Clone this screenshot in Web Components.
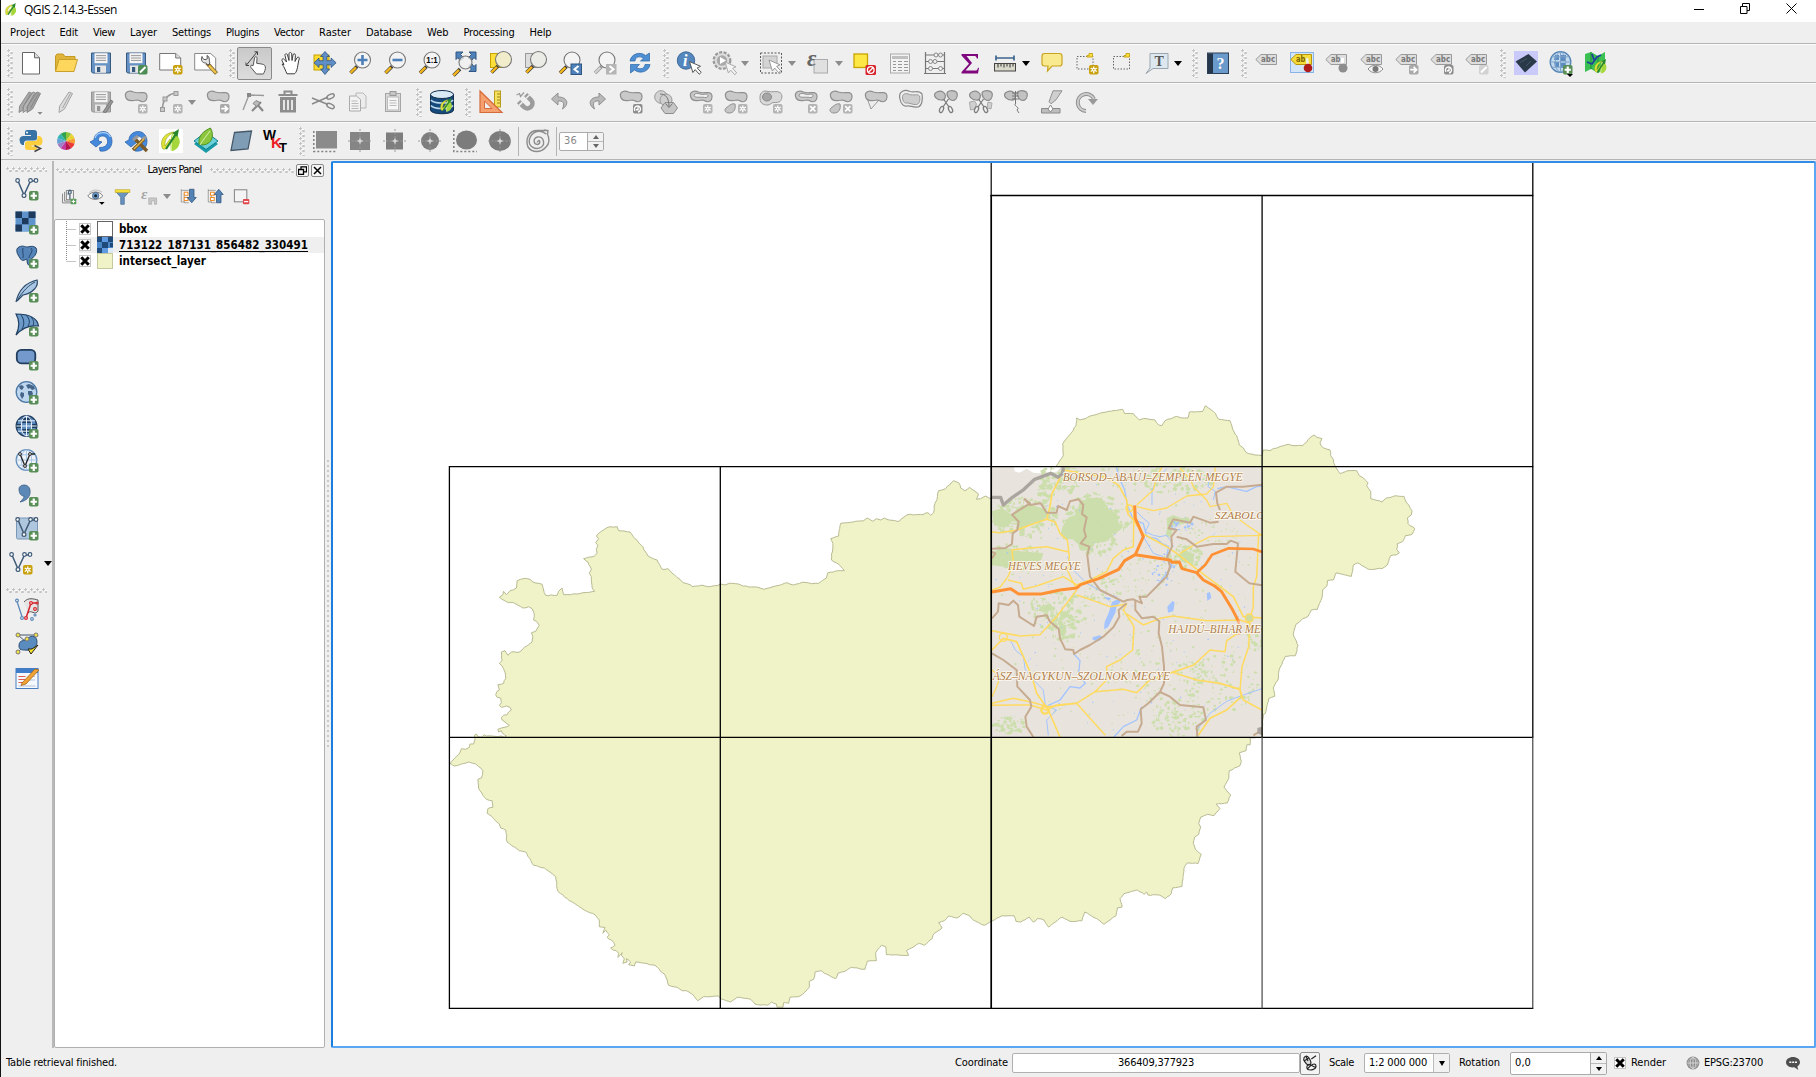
<!DOCTYPE html>
<html lang="en">
<head>
<meta charset="utf-8">
<title>QGIS 2.14.3-Essen</title>
<style>
html,body{margin:0;height:100%;overflow:hidden;background:#efefef;color:#000}
body{font:11px "DejaVu Sans Condensed","DejaVu Sans",sans-serif;font-stretch:condensed}
</style>
</head>
<body>
<qgis-window></qgis-window>
<script>
/* ---------- icon library, every icon is drawn on a 24 x 24 grid ---------- */
const badge=(c,inner)=>`<rect x="14" y="14" width="9.5" height="9.5" rx="1.8" fill="${c}"/>${inner}`;
const plus=badge('#5a8e58','<path d="M18.75 15.6v6.3M15.6 18.75h6.3" stroke="#fff" stroke-width="2.2"/>');
const ast='<path d="M18.75 15.4v6.8M15.7 17l6.1 3.5M15.7 20.5l6.1-3.5" stroke="#fff" stroke-width="1.3"/><circle cx="18.75" cy="18.75" r="1.7" fill="#fff"/>';
const gold=badge('#c8a10c',ast+'<circle cx="18.75" cy="18.75" r=".8" fill="#c8a10c"/>');
const gstar=badge('#b4b4b4',ast+'<circle cx="18.75" cy="18.75" r=".8" fill="#b4b4b4"/>');
const gx=badge('#b4b4b4','<path d="M16.2 16.2l5.2 5.2M21.4 16.2l-5.2 5.2" stroke="#fff" stroke-width="1.7"/>');
const garrow=badge('#a9a9a9','<path d="M15.2 18.7h6M18.6 15.8l3 2.9-3 2.9" fill="none" stroke="#fff" stroke-width="1.7"/>');
const grot=badge('#8c8c8c','<path d="M16 20.8a3 3 0 1 1 3 1.2M19 17.3v2.4h-2" fill="none" stroke="#fff" stroke-width="1.4"/>');
const cursor=(x,y,f='#fff',s='#555')=>`<path transform="translate(${x} ${y})" d="M0 0l3.4 11 2.3-2.9 4 4.6 2-1.8-4-4.5 3.3-1.6z" fill="${f}" stroke="${s}" stroke-width="1"/>`;
const mag=(x,y,inner='',h='#f3b51c',fill='#f4f4f4')=>`<path d="M${x-5.5} ${y+6.5}L${x-12} ${y+13}" stroke="#333" stroke-width="3.6"/><path d="M${x-6.5} ${y+7.3}L${x-12} ${y+12.8}" stroke="${h}" stroke-width="2.4"/><circle cx="${x}" cy="${y}" r="8" fill="${fill}" stroke="#777" stroke-width="1.1"/>${inner}`;
const floppy=(a,b)=>`<path d="M2.5 2h19v20H3.6L2.5 20.8z" fill="${a}" stroke="${b}"/><rect x="5.5" y="2.2" width="13" height="10" fill="#f4f4f4"/><path d="M7 4.6h10M7 7h10M7 9.4h10" stroke="#999"/><rect x="6" y="14.5" width="11" height="7.3" fill="#e6e6e6"/><rect x="8" y="16" width="3.2" height="5" fill="${b}"/>`;
const blob=(f='#c9c9c9',s='#8f8f8f')=>`<path d="M1.400 5.600C1 1 6 .500 9.500 2c4 1.600 7 .2 10.500.6C23.500 3.300 23.500 7 22.400 9.500c-1.400 3-5 2.600-7 1-2-1.300-4 .2-7 .1C4.500 10.800 1.700 9 1.400 5.600z" fill="${f}" stroke="${s}" stroke-width="1.200"/>`;
const blobHole='<path d="M5 5.200c.5-2 3.500-2.200 6-1.200 3 1.200 6-.500 7.500.3 1.500 1.200 0 4-3 3.200-3-.9-10.500 1-10.500-2.300z" fill="#efefef" stroke="#8f8f8f"/>';
const tag=(f='#dedede',s='#9a9a9a',t='#777',w='abc')=>`<path d="M.8 8.500L6 3.500h15.500v10H6z" fill="${f}" stroke="${s}"/><text x="6" y="11.400" font-size="8" font-weight="bold" font-family="DejaVu Sans" fill="${t}" textLength="${w.length*4.7}" lengthAdjust="spacingAndGlyphs">${w}</text>`;
const vnodes=(c='#3d5a78',y=0)=>`<path d="M3 ${4+y}L9 ${18+y}L15.500 ${4+y}H21" fill="none" stroke="${c}" stroke-width="1.500"/><g fill="#fff" stroke="${c}" stroke-width="1.200"><circle cx="2.600" cy="${3.500+y}" r="1.800"/><circle cx="9" cy="${18.500+y}" r="1.900"/><circle cx="15.500" cy="${3.500+y}" r="1.800"/><circle cx="21" cy="${3.500+y}" r="1.800"/></g>`;
const scissors=()=>`<g fill="none" stroke="#7c7c7c" stroke-width="1.300"><path d="M9.500 9l5.500 8M14.500 9l-5.500 8"/><ellipse cx="7.500" cy="19.500" rx="1.800" ry="3.200" transform="rotate(25 7.500 19.500)"/><ellipse cx="16.500" cy="19.500" rx="1.800" ry="3.200" transform="rotate(-25 16.500 19.500)"/></g>`;
const halves='<path d="M.7 6C-.3 2 6 0 9 2c3 1.500 3 5.500 1 7.500-2 1.500-4 0-6-.2C2 8.500 1.200 7.500.7 6zM13.500 2c3-2.500 9.800-1.500 9.800 2.500 0 3.500-2 6-5 6-3-.3-6.500-5.500-4.800-8.500z" fill="#c2c2c2" stroke="#8a8a8a" stroke-width="1.200"/>';
const pencil=(x,y,f,s)=>`<path transform="translate(${x} ${y})" d="M12 1l3.500 1.500-8 15.500-5.500 3.500.6-6.300z" fill="${f}" stroke="${s}"/><path transform="translate(${x} ${y})" d="M13.500 2.500L5.500 17" stroke="${s}" fill="none"/>`;
const qleaf='<path d="M14 3c6 3 8 9 6 13-1.500 4-5 6-8 6-1-7-1-13 2-19z" fill="#a5d63c"/><path d="M14.500 5c-2 5-2.500 11-2.300 17" stroke="#e7f7b4" fill="none"/><path d="M15 3C6 4 1 10 3 18c.5 3 3 3 5 0l4-6-1-2-5 7c-.500-4 1-9 6-12z" fill="#e2e43a" stroke="#8aa018" stroke-width=".6"/><path d="M7 20L17 5" stroke="#28862e" stroke-width="2.200"/><path d="M20 0l-1.500 8-5-4z" fill="#28862e"/>';
const globe=(f='#bfd7ee',s='#4d79a8')=>`<circle cx="11.500" cy="11" r="10.300" fill="${f}" stroke="${s}" stroke-width="1.300"/>`;
const meridians=(s)=>`<path d="M1.500 11h20M3 5.800h17M3 16.200h17M11.500 1v20" stroke="${s}" fill="none"/><ellipse cx="11.500" cy="11" rx="5.200" ry="10" fill="none" stroke="${s}"/>`;
const target='<path d="M12 0v24M0 12h24" stroke="#9c9c9c" stroke-dasharray="2 1.500"/><path d="M12 9.500v5M9.500 12h5" stroke="#dcdcdc" stroke-width="1.500"/>';
const undo='<path d="M9 3L2.500 9 9 15v-4c5-.500 7 2 4.500 8C20.500 14.500 19 7 9 7z" fill="#b9b9b9" stroke="#8e8e8e"/>';
const wrench='<path d="M22.500 22.500L13 12" stroke="#7b6430" stroke-width="4"/><path d="M22 22L15 14.500" stroke="#f0c34a" stroke-width="2.500"/><path d="M8 5.500c-1.500 3 0 6.500 3.500 6.500 1 0 2 1.500 2.500 2l2-2c-1.500-2 .500-6-3-7.500l.3 3.300-2.300 1-2.500-1.500z" fill="#e4e4e4" stroke="#555"/>';
const hand='<path d="M6 13.500L4.200 10c-1-2 1-3 2.200-1.500L8.500 11 7 4.500c-.300-2 2-2.400 2.500-.5L11 9.500V3c0-2 2.600-2 2.700 0L14 9.500l1-5.600c.4-1.700 2.500-1.400 2.400.4L17 10.500l2-3.700c.9-1.500 2.800-.5 2.200 1.200C19.500 13 20 20 16.500 22.800H9C7.500 20 6.500 16 4 13z" fill="#fff" stroke="#3c3c3c"/>';

const ICONS={
new:'<path d="M3.500 1.500h12l5 5.300V23h-17z" fill="#fff" stroke="#666"/><path d="M15.500 1.500v5.300h5" fill="#ddd" stroke="#666"/>',
open:'<path d="M1.500 20V5l1.500-2h6l2 2.500h10V9" fill="#e0b437" stroke="#c39a26"/><path d="M5 8.500h18.500L20 20.500H1.500z" fill="#fcd75c" stroke="#c9a02c"/>',
save:floppy('#6591c4','#35597f'),
saveas:floppy('#6591c4','#35597f')+badge('#4c8c55','<path d="M16 21.500l5.500-5.500" stroke="#fff" stroke-width="2"/>'),
print:'<path d="M.7 2.500h16l5 4.500v12H.7z" fill="#fff" stroke="#777"/><path d="M16.700 2.500V7h5" fill="#ddd" stroke="#777"/>'+gold,
composer:'<path d="M.7 2.500h16l5 4.500v12H.7z" fill="#fff" stroke="#888"/>'+wrench,
touch:'<path d="M10.500 13l1-6c.5-2 2.600-1.500 2.500.3l-.3 5 5 .7c3 .5 4 2 3.700 4.500-.4 3-2 5-2 5.500h-7L8 16.500c-1.300-2 .6-3 2-1.700z" fill="#fff" stroke="#555"/><path d="M3.500 14L14 1M3 11.500v3h3M14.500 4V.8h-3" fill="none" stroke="#444"/>',
pan:hand,
panto:'<rect x="1" y="4" width="15" height="15" fill="#fddc2e" stroke="#c5a200"/><path d="M12 .500l4.500 5h-2.600v4.200h4.200V7l5 4.800-5 4.700v-2.700h-4.200V18h2.600L12 23.500 7.500 18h2.600v-4.200H6v2.700L1 11.800 6 7v2.700h4.100V5.500H7.500z" fill="#5e8fc8" stroke="#2e527b" stroke-width=".8"/>',
zoomin:mag(14.500,9,'<path d="M14.500 4v10M9.500 9h10" stroke="#4d7fb9" stroke-width="2.600"/>'),
zoomout:mag(14.500,9,'<path d="M9.500 9h10" stroke="#4d7fb9" stroke-width="2.600"/>'),
zoom11:mag(14,9,'<text x="8.300" y="12.400" font-size="9.500" font-weight="bold" font-family="Liberation Sans" textLength="11.500" lengthAdjust="spacingAndGlyphs">1:1</text>'),
zoomfull:'<path d="M3 1h7L7.500 3.500 11 7 7 9.500 5 6.500 3 8.500zM23 1h-7l2.500 2.500L15 7l4 2 2-2.500 2 2zM23 20.500h-7l2.500-2.500-3-3 3-2.500 2.500 3 2-2z" fill="#4f82ba" stroke="#2f5580"/>'+mag(12.500,11.500,'','#f3b51c','rgba(240,240,240,.8)').replace('r="8"','r="6.500"'),
zoomsel:'<rect x="2.500" y="2.500" width="13" height="14" fill="#fddf38" stroke="#c5a200"/>'+mag(15.500,8.500,'','#f3b51c','#f1edca'),
zoomlayer:'<rect x="2.500" y="2.500" width="13" height="14" fill="#ddd" stroke="#999"/>'+mag(15.500,8.500,'','#f3b51c','#ecece6'),
zoomlast:mag(14,9)+'<rect x="13" y="13" width="10.500" height="10.500" fill="#4f82ba" stroke="#2f5580"/><path d="M20.500 15l-4 3.300 4 3.300" stroke="#fff" stroke-width="2" fill="none"/>',
zoomnext:mag(14,9,'','#d0d0d0').replace('stroke="#333"','stroke="#8f8f8f"')+'<rect x="13" y="13" width="10.500" height="10.500" fill="#b5b5b5"/><path d="M16.500 15l4 3.300-4 3.300" stroke="#fff" stroke-width="2" fill="none"/>',
refresh:'<path d="M2 10C3 3 12 0 17.500 4.500L21.500 2v8h-9l3-2.800C11 4.500 7.500 6 7 10zM22 13.500C21 20.500 12 23.500 6.500 19L2.500 22v-8.500h9l-3 3c4.500 2.500 8 1 8.500-3z" fill="#4f8fd3" stroke="#2a66a6" stroke-width=".7"/>',
identify:'<circle cx="9" cy="9.500" r="8.700" fill="#5487be" stroke="#3f6a9a"/><text x="6" y="15" font-size="16" font-style="italic" font-weight="bold" font-family="Liberation Serif" fill="#fff">i</text>'+cursor(12.500,10.500),
action:'<circle cx="10" cy="9.500" r="8.300" fill="#ddd" stroke="#999" stroke-width="2.200" stroke-dasharray="3 1.500"/><circle cx="10" cy="9.500" r="5.200" fill="#aaa"/><path d="M8 6l6 3.500-6 3.500z" fill="#fff"/>'+cursor(13,11,'#f4f4f4','#aaa'),
select:'<rect x="1.500" y="2" width="21" height="20" fill="none" stroke="#555" stroke-dasharray="2 1.500"/><rect x="4" y="5" width="14" height="12" fill="#d4d4d4" stroke="#aaa"/>'+cursor(10,9,'#fff','#999'),
expr:'<rect x="8" y="8.500" width="13.500" height="13.500" fill="#e0e0e0" stroke="#aaa"/><text x="1" y="15" font-size="23" font-style="italic" font-family="Liberation Serif" fill="#666">ε</text>',
deselect:'<rect x="1" y="3" width="13.500" height="13.500" fill="#fde745" stroke="#c9a400" stroke-width="1.300"/><rect x="12.500" y="14" width="10.500" height="10" rx="1.500" fill="#d8232a"/><circle cx="17.750" cy="19" r="3.300" fill="none" stroke="#fff" stroke-width="1.300"/><path d="M15.500 21.300l4.500-4.500" stroke="#fff" stroke-width="1.300"/>',
table:'<rect x="2.500" y="3" width="19" height="19" fill="#f3f3f3" stroke="#aaa"/><path d="M4 6.500h16" stroke="#c0c0c0" stroke-width="3"/><path d="M5 10.500h3M10 10.500h4M16 10.500h4M5 13.500h3M10 13.500h4M16 13.500h4M5 16.500h3M10 16.500h4M16 16.500h4M5 19.500h3M10 19.500h4M16 19.500h4" stroke="#999"/>',
abacus:'<path d="M2.500 1v21M21.500 1v21M1 22.500h22M3 4h18M3 10.500h18M3 17.500h18" stroke="#777" stroke-width="1.200" fill="none"/><g fill="#f0f0f0" stroke="#888"><circle cx="13" cy="4" r="2"/><circle cx="17.500" cy="4" r="2"/><circle cx="7.500" cy="10.500" r="2"/><circle cx="12" cy="10.500" r="2"/><circle cx="7.500" cy="17.500" r="2"/><circle cx="17.500" cy="17.500" r="2"/></g>',
sigma:'<path d="M3.500 3h16.500v4.500h-1.200C18.500 5.500 17.500 5 16 5H8.500l5.500 7-6.500 7.500H17c1.800 0 2.500-.800 3-2.800h1L20 22.500H3.500V21L11 12.800 3.500 4.500z" fill="#80087f"/>',
measure:'<path d="M3 7h18M3 4.500v5M21 4.500v5" stroke="#3c658c" stroke-width="1.700"/><rect x="1.500" y="12.500" width="21" height="7.500" fill="#d9dacb" stroke="#444"/><path d="M5 13v3.500M8 13v2.500M11 13v3.500M14 13v2.500M17 13v3.500M20 13v2.500" stroke="#333"/>',
tip:'<path d="M4.500 2.500h15q2.500 0 2.500 2.500v7.500q0 2.500-2.500 2.500H12l-4.500 5 .5-5H4.500Q2 15 2 12.500V5q0-2.500 2.500-2.500z" fill="#faea8f" stroke="#c9a41e" stroke-width="1.200"/>',
annonew:'<rect x="2" y="5.500" width="16" height="12.500" fill="none" stroke="#666" stroke-dasharray="1.500 1.500"/><path d="M14 2.500h3.500v3.500H12V4.500h2z" fill="#fde23a" stroke="#c9a41e"/>'+gold,
anno:'<rect x="3.500" y="5.500" width="16" height="12.500" fill="none" stroke="#666" stroke-dasharray="1.500 1.500"/><path d="M16 2.500h3.500v3.500H14V4.500h2z" fill="#fde23a" stroke="#c9a41e"/>',
textanno:'<path d="M5 2.500h18v15H8l-7 5 4-5.500z" fill="#dde7ef" stroke="#9aa6b0"/><text x="9.500" y="15" font-size="14" font-weight="bold" font-family="Liberation Serif" fill="#555">T</text>',
help:'<rect x="1.500" y="2" width="21" height="20.500" fill="#6a9acb" stroke="#2d3f55"/><rect x="2" y="2.500" width="5" height="19.500" fill="#26374c"/><text x="10.500" y="18" font-size="16" font-family="Liberation Serif" font-weight="bold" fill="#fff">?</text>',
label:tag(),
labelpin:'<rect x=".500" y="1.500" width="23" height="20" fill="#d5e5f8" stroke="#87b3e6"/>'+tag('#f6dc3a','#b8960a','#7a6400','ab')+'<path d="M17 7l1 9" stroke="#eee" stroke-width="2.500"/><circle cx="18" cy="17" r="4.300" fill="#b01c1c"/>',
labelpin2:tag('#dedede','#9a9a9a','#777','ab')+'<path d="M17.500 7v8" stroke="#fff" stroke-width="3"/><circle cx="18" cy="17" r="4.500" fill="#8d8d8d"/>',
labeleye:tag()+'<path d="M8 18c4-5 11-5 15 0-4 5-11 5-15 0z" fill="#f6f6f6" stroke="#888"/><circle cx="15.500" cy="18" r="3" fill="#777"/>',
labelmove:tag()+garrow,labelrot:tag()+grot,labeledit:tag()+badge('#d2d2d2','<path d="M16 21.500l5.500-5.500" stroke="#fff" stroke-width="2.200"/>'),
darktile:'<rect width="24" height="24" fill="#c9cafa"/><path d="M1.500 10.500L14.500 3l8.500 7.500-12 11z" fill="#2a3947"/><path d="M6 11.500l7-4M12 15l5-5" stroke="#42566a"/>',
webglobe:globe('#c4dbef','#5484b4')+'<path d="M6 4h4v5H5zM12 4h5v6h-5zM5 11h5v5H6zM12 12h5v5h-5z" fill="#5d8cc0"/>'+meridians('#7da3cb')+plus+'<path d="M18 23h6l-3 3z" fill="#000"/>',
mapq:'<path d="M1 3l6-2 7 4 7-4v17l-7 4-7-4-6 3z" fill="#3bc053"/><path d="M7 1v17M14 5v17" stroke="#238b38"/><path d="M3 11l5 2 5-7 4-2M10 9l-2-6" stroke="#20409c" stroke-width="1.800" fill="none"/><g transform="translate(9 8) scale(.65)">'+qleaf+'</g>',
pencils:pencil(-2,1,'#aaa','#8b8b8b')+pencil(2,1,'#b5b5b5','#8b8b8b')+pencil(6,1,'#a3a3a3','#858585')+'<path d="M18.500 22h5l-2.500 2.800z" fill="#888"/>',
pencil:pencil(3,1,'#dcdcdc','#a4a4a4'),
savegray:floppy('#aeaeae','#969696')+'<path d="M14 22l8-12 2 1.500-7 11z" fill="#999" stroke="#777"/>',
addfeat:blob()+gstar,movefeat:blob()+garrow,rotfeat:blob()+grot,
curve:'<path d="M3.500 20C3 11 8 4 17 3" fill="none" stroke="#999" stroke-width="1.600"/><g fill="#c8c8c8" stroke="#999"><rect x="1.500" y="17.500" width="4" height="4"/><rect x="4" y="7" width="4" height="4"/><rect x="15" y="1.500" width="4" height="4"/></g>'+gstar,
nodes:'<path d="M2 20L8 5l15 .5" fill="none" stroke="#999" stroke-width="1.300"/><rect x="6" y="3" width="4" height="4" fill="#888"/><path d="M11 21l9-9M15 13l7 8" stroke="#888" stroke-width="2.200"/><path d="M12 13.500l3-3 4 2-3 4z" fill="#bbb" stroke="#888"/>',
trash:'<path d="M4 7h16v15.500H4z" fill="#8d8d8d"/><path d="M2.500 5h19M8.500 4V1.500h7V4" stroke="#8d8d8d" stroke-width="2" fill="none"/><path d="M8 10v10M12 10v10M16 10v10" stroke="#e6e6e6" stroke-width="2"/>',
cut:'<path d="M1 8l16 6.500M1 14l16-7" stroke="#8a8a8a" stroke-width="1.400"/><ellipse cx="19.500" cy="6.500" rx="4" ry="2" transform="rotate(-25 19.500 6.500)" fill="none" stroke="#8a8a8a" stroke-width="1.500"/><ellipse cx="19.500" cy="16" rx="4" ry="2" transform="rotate(25 19.500 16)" fill="none" stroke="#8a8a8a" stroke-width="1.500"/>',
copy:'<path d="M10 3h7l3 3v12H10z" fill="#ececec" stroke="#b8b8b8"/><path d="M3.500 6h7l4 3.500V21h-11z" fill="#f3f3f3" stroke="#aaa"/><path d="M5.500 11h6M5.500 13.500h7M5.500 16h7M5.500 18.500h7" stroke="#b8b8b8"/>',
paste:'<rect x="4.500" y="3.500" width="15" height="18" fill="#d9d9d9" stroke="#a5a5a5"/><rect x="6.500" y="7" width="11" height="13" fill="#f6f6f6" stroke="#bbb"/><rect x="9" y="1.500" width="6" height="4" fill="#c5c5c5" stroke="#999"/><path d="M8.500 10.500h7M8.500 13h7M8.500 15.500h7" stroke="#bbb"/>',
db:'<path d="M.5 4v16c0 5 23 5 23 0V4" fill="#174a7c" stroke="#12304e"/><ellipse cx="12" cy="4.500" rx="11.500" ry="4" fill="#d9eaf6" stroke="#12304e"/><path d="M1 10c3 4 19 4 22 0M1 15.500c3 4 19 4 22 0" stroke="#bcd6ea" stroke-width="1.700" fill="none"/><g transform="translate(9 8) scale(.62)">'+qleaf+'</g>',
setsquare:'<rect x="15.500" y="1" width="6" height="16" fill="#f6e25e" stroke="#b89c1c"/><path d="M18 4h3M18 7h3M18 10h3M18 13h3" stroke="#9b8417"/><path d="M1 1v21.500h22z" fill="#f6a06f" stroke="#d56a3a" stroke-width="1.200"/><path d="M5.500 11v7.500h7.500z" fill="#efefef" stroke="#d56a3a"/>',
magnet:'<g transform="rotate(-45 12 12)"><path d="M7 6.500V14a5 5 0 0 0 10 0V6.500" fill="none" stroke="#9c9c9c" stroke-width="4.600"/><path d="M4.700 9.500h4.600M14.700 9.500h4.600" stroke="#efefef" stroke-width="1.500"/></g><path d="M2.500 5l3-1.500 1 3 3.500-4" stroke="#999" stroke-width="1.200" fill="none"/>',
undo:undo,redo:`<g transform="matrix(-1 0 0 1 24 0)">${undo}</g>`,
simplify:'<circle cx="7" cy="7" r="6.300" fill="#d3d3d3" stroke="#999"/><circle cx="12" cy="10" r="6" fill="#cfcfcf" stroke="#999"/><path d="M11 12.500h8.500l4 5.500-4 5.500H11L7 18z" fill="#c6c6c6" stroke="#8d8d8d"/><path d="M6 4c6 0 9 4 9 13M11.500 13.500l3.500 4 3.500-4" fill="none" stroke="#777"/>',
addring:blob()+blobHole+gstar,
addpart:blob()+'<path d="M11 14c1 5-1 9-6 9-4 0-5-3-3-5 3-2 5-5 9-4z" fill="#c6c6c6" stroke="#8f8f8f"/>'+gstar,
fillring:'<path d="M1 7c0-5 4-7 8-5.500 5 1 9-1 12 1s2 7 0 9c-3 2-7 0-9 2s-6 2-9 0c-2-2-2-4-2-6.500z" fill="#d9d9d9" stroke="#999"/><ellipse cx="8" cy="7" rx="4.500" ry="4" fill="#a6a6a6" stroke="#888"/>'+gstar,
delring:blob()+blobHole+gx,
delpart:blob()+'<path d="M11 14c1 5-1 9-6 9-4 0-5-3-3-5 3-2 5-5 9-4z" fill="#c6c6c6" stroke="#8f8f8f"/>'+gx,
reshape:'<path d="M3 8l4 11 8-9" fill="#eee" stroke="#999"/>'+blob(),
offset:'<path d="M.7 8c-1-7 5-9 10.300-6.500C15 3 20-.500 23 4c1 5 0 12-4 13-5 1-8-2-11-1s-6.300-2-7.300-8z" fill="#eee" stroke="#888" stroke-width="1.200"/><path d="M3.500 8c-.500-4 3-5.500 7-3.500 4 1.300 8-1 10 1.500 1 4 0 8-3 8.500-4 .5-7-2-10-1.500-2.500.500-3.500-2-4-5z" fill="#cdcdcd" stroke="#999"/>',
split:halves+scissors(),
splitparts:halves+'<path d="M.5 12l5-1 2 3-2 5-4 1zM19 12l4 1-1 6-4-1z" fill="#d0d0d0" stroke="#aaa"/>'+scissors(),
merge:halves+'<path d="M8 3h7M8 6h7M8 9h7M11.500 1v12M12 13c-4 3 5 4 1 7l2 3" stroke="#777" fill="none"/>',
mergeattr:'<path d="M2.500 18.500h18.500V23H2.500z" fill="#bdbdbd" stroke="#8a8a8a"/><path d="M11.500 15l-2.500 4 2.500 3 2.500-3z" fill="#fff" stroke="#888"/><path d="M14 .8h9l-6 9-5 4-2-2z" fill="#cfcfcf" stroke="#909090"/>',
rotsym:'<path d="M12 21A8.500 8.500 0 1 1 20 9" fill="none" stroke="#8f8f8f" stroke-width="4"/><path d="M12 21A8.500 8.500 0 1 1 20 9" fill="none" stroke="#ccc" stroke-width="2"/><path d="M14 9h10l-5 6z" fill="#999"/>',
python:'<path d="M8 1h7q3 0 3 3v5q0 2.500-3 2.500H8q-3 0-3 3V16H3q-2.500-1.500-2.500-5T4 7h8V6H6V3q0-2 2-2z" fill="#3873a5"/><path d="M14 21H9q-3 0-3-2.500v-4Q6 12 9 12h6.500q3 0 3-3V7h2q3 1 3 5t-3 4.500h-8v1H18v2q0 1.500-4 1.500z" fill="#fdce3d"/><circle cx="8" cy="3.500" r="1" fill="#fff"/><path d="M15.500 16.500l6 3-6 3" fill="none" stroke="#444" stroke-width="1.500"/>',
wheel:(()=>{const c=['#8fc43d','#e7d431','#f6a12e','#ee3a36','#b8174e','#c23a9e','#9f7fc8','#68a3d6','#36b3b3','#30a352'];let s='';c.forEach((k,i)=>{const a=(i*36-90)*Math.PI/180,b=(i*36-54)*Math.PI/180,p=t=>`${12+9*Math.cos(t)} ${12+9*Math.sin(t)}`;s+=`<path d="M12 12L${p(a)}A9 9 0 0 1 ${p(b)}z" fill="${k}"/>`});return s})(),
reload:'<path d="M1 13l4-2c0-10 17-13 18 1 0 7-5 11-12 10l-.5-3.500C22 19 20 6 13 7c-3 0-4 3-3.500 5L13 13 7 18z" fill="#4489dc" stroke="#2c65ac" stroke-width=".8"/><path d="M6 9C8 2 19 2 21.500 8" stroke="#a9ccf4" fill="none" stroke-width="1.300"/>',
reloadcfg:'<path d="M1 13l4-2c0-10 17-13 18 1 0 7-5 11-12 10l-.5-3.500C22 19 20 6 13 7c-3 0-4 3-3.500 5L13 13 7 18z" fill="#4489dc" stroke="#2c65ac" stroke-width=".8"/><path d="M9 21l11-11M11 10l12 12" stroke="#7a5a2a" stroke-width="3.500"/><path d="M18 10l4-2M9 11l5-4" stroke="#999" stroke-width="3"/><path d="M10 20l10-10" stroke="#e5b64a" stroke-width="1.500"/>',
qgis:'<rect width="24" height="24" fill="#fff"/>'+qleaf,
layersleaf:'<path d="M0 15L12 6l12 9-12 9z" fill="#189ba7"/><path d="M0 12L12 3l12 9-12 8.500z" fill="#6bd0dc" stroke="#0f7f8e"/><path d="M5 15C4 6 10 2 16.500-1c4 7 2 16-7.500 17z" fill="#8cc63f" stroke="#4f9423"/><path d="M6 16C9 11 13 6 16 2" stroke="#dff2b0" fill="none"/>',
para:'<path d="M5.500 3.500l17-1.500-3.500 18L2 21.500z" fill="#7f9eb6" stroke="#45586a" stroke-width="1.300"/>',
wkt:'<g font-family="Liberation Sans" font-weight="bold"><text x="-1" y="11" font-size="14" textLength="13" lengthAdjust="spacingAndGlyphs">W</text><text x="7" y="19" font-size="15" fill="#ed1c24">K</text><text x="15" y="23" font-size="13">T</text></g>',
rsq:'<rect x="3" y="2" width="21" height="17.500" fill="#8b8b8b"/><path d="M.8 2v20.500H24" fill="none" stroke="#808080" stroke-width="1.500" stroke-dasharray="2 2"/>',
rcross:'<rect x="2" y="3" width="20" height="18" fill="#858585"/>'+target,
scross:'<rect x="3" y="3.500" width="17" height="17" fill="#7e7e7e"/>'+target,
ccross:'<circle cx="12" cy="12" r="9" fill="#7e7e7e"/>'+target,
elldots:'<ellipse cx="13.500" cy="11" rx="10.500" ry="9.500" fill="#7c7c7c"/><path d="M.8 1v21.500H24" fill="none" stroke="#808080" stroke-width="1.500" stroke-dasharray="2 2"/>',
ellcross:'<ellipse cx="12" cy="12" rx="11" ry="10" fill="#7b7b7b"/>'+target,
spiral:'<path d="M12 12c2-2 3 3-.5 3.500-4 0-5-6 0-7.500 6-1 8 7 4 10-6 4-14-1-12-8C6 2 15 0 20 5M12.500 12c0 0-1.500 1-1 1.500M21 4c2 4 3 10-1 14-5 6-14 6-18 0C-1 10 3 1 12 1.500h8M18 1l4 .5-.5 4" fill="none" stroke="#8c8c8c" stroke-width="1.400"/>',
addvec:vnodes()+plus,
addras:'<rect x=".5" y=".5" width="20" height="20" fill="#5f93cc"/><path d="M.5.500h6.500v6.500h-6.500zM13.500 .500h7v6.500h-7zM7 7h6.500v6.500H7zM.5 13.500h6.500v7h-6.500z" fill="#1d3a5c"/><path d="M7 13.500h6.500v7H7z" fill="#79a8da"/>'+plus,
addpg:'<path d="M4 2c4-2 6 0 8 0s6-2 9 1c2 3-1 9-4 10-1 3 0 6-2 7-3 1-3-4-3-6-3 1-5 3-7-1C2 9 0 4 4 2z" fill="#5584b8" stroke="#25486e"/><path d="M8 3c-1 4 1 7 0 10M16 3c3 4-2 6-2 10" stroke="#25486e" fill="none"/>'+plus,
addlite:'<path d="M1 23C3 14 9 4 22 1c2 6-4 13-14 15L2 22" fill="#a9c6e3" stroke="#2a4a6c" stroke-width="1.200"/><path d="M3 20C8 12 14 6 20 3" stroke="#2a4a6c" fill="none"/>'+plus,
addms:'<path d="M1 1c10 0 21 2 22.500 12C15 12 7 15 1 22 5 14 5 8 1 1z" fill="#6b9acb" stroke="#1f3f61" stroke-width="1.200"/><path d="M6 2c4 5 3 11 1 14M11 2c4 4 4 8 2 11M16 4c3 3 3 6 2 9" stroke="#1f3f61" fill="none"/>'+plus,
addora:'<rect x="1.800" y="2.800" width="18.500" height="13.500" rx="4.500" fill="#7399cd" stroke="#213e5f" stroke-width="1.800"/>'+plus,
addwms:globe()+'<path d="M4 5l3-1 2 2-2 3-2-1zM11 4l3-1 5 2 1 3-3 1-2-2-2 1zM13 10l4 0 1 3-3 4-2-4zM6 11l3 1 0 3-2 3-2-4z" fill="#46658a"/>'+plus,
addwcs:globe('#5d8abf','#1f3f61')+'<path d="M7 3h9v5H7zM2 9h4v4H2zM17 9h4v4h-4zM7 14h9v4H7z" fill="#1f3f61"/>'+meridians('#eaf2fa')+plus,
addwfs:globe('#eef4fa','#6590bd')+meridians('#a9c6e3')+'<path d="M5 5l5 12 5-12h5" fill="none" stroke="#222" stroke-width="1.300"/><g fill="#fff" stroke="#222"><circle cx="5" cy="5" r="1.400"/><circle cx="10" cy="17" r="1.400"/><circle cx="15" cy="5" r="1.400"/></g>'+plus,
comma:'<path d="M4 6c0-5 10-6 11 1 1 7-4 11-10 12 3-3 4-4 4-6-4 0-5-4-5-7z" fill="#5c88b8" stroke="#3c6088" stroke-width=".8"/>'+plus,
virt:'<rect x="1.500" y="1" width="21" height="21" rx="1.500" fill="#aec6de" stroke="#7a97b5"/>'+vnodes('#3f5873',-1)+plus,
newshp:vnodes('#3d5a78')+gold,
topo:'<path d="M1.500 2l6 18" stroke="#5c88b8" stroke-width="1.300"/><path d="M9 4c4-5 10-3 14-2v11c-3 5-7-2-10 2" fill="#e4e4e4" stroke="#555"/><path d="M11 20l5-15h6" stroke="#d6222b" stroke-width="1.500" fill="none"/><g fill="#fff" stroke-width="1.200"><g stroke="#5c88b8"><circle cx="2" cy="2.500" r="1.400"/><circle cx="7" cy="20" r="1.400"/><circle cx="17" cy="21" r="1.300"/><circle cx="20" cy="17" r="1"/></g><g stroke="#d6222b"><circle cx="11" cy="20" r="1.400"/><circle cx="16" cy="5" r="1.400"/><circle cx="22" cy="5" r="1"/><circle cx="20" cy="11" r="1.400"/></g></g>',
geomcheck:'<path d="M3 3l18 0M3 20l9-9M3 3l9 8" stroke="#456" fill="none"/><path d="M4 14c0-7 5-4 9-8 4-3 9-2 9 4s-7 9-12 8c-3 0-6 0-6-4z" fill="#5a8cc0" stroke="#2e527b"/><g fill="#f7e345" stroke="#777"><circle cx="3" cy="3" r="2"/><circle cx="21" cy="3" r="2"/><circle cx="12" cy="7" r="2"/><circle cx="3" cy="20" r="2"/></g><path d="M13 17l3 5 7-9-6 4z" fill="#f9e326" stroke="#222"/>',
editform:'<rect x="1" y="2.500" width="22" height="20" fill="#f5f8fd" stroke="#4a7ec0"/><rect x="1" y="2.500" width="22" height="4.500" fill="#3f7dcb"/><path d="M3.500 10.500h7M3.500 13.500h7M3.500 16.500h7" stroke="#e25b50"/><path d="M13 10.500h7M13 14h7M3.500 20h17" stroke="#b4c4dc"/><path d="M7 17l13-14 4 1L11 18l-5 1.500z" fill="#f0a335" stroke="#a8691a" stroke-width=".8"/>',
lgroup:'<path d="M3.500 8v13h12M6.500 5.500v13h11" fill="none" stroke="#888" stroke-width="1.400"/><rect x="9" y="3.500" width="10" height="13" fill="#f2f2f2" stroke="#888" stroke-width="1.400"/><path d="M14 16V7M11.500 9.500C12 0 17 2 15.500 8" fill="none" stroke="#4a6278" stroke-width="1.800"/>'+'<rect x="15" y="15" width="8" height="8" rx="1" fill="#5a9a5a"/><path d="M19 16.500v5M16.500 19h5" stroke="#fff" stroke-width="1.500"/>',
leye:'<path d="M1 12c5-7 16-7 20 0-5 6-15 6-20 0z" fill="#fff" stroke="#777" stroke-width="1.300"/><path d="M3 8c4-5 12-5 17-1" stroke="#aaa" fill="none"/><circle cx="11.500" cy="11.500" r="4.300" fill="#6f9dc9" stroke="#3d5a78"/><circle cx="11.500" cy="11.500" r="2" fill="#123"/><path d="M16 20h7.500l-3.700 3.700z"/>',
lfilter:'<path d="M2 4.500h20L14.500 13v10h-5V13z" fill="#6a94c0" stroke="#3f668f"/><rect x="1.500" y="2.500" width="21" height="4" fill="#f5dd3a" stroke="#b39e1c" stroke-width=".7"/>',
leps:'<text x="0" y="16" font-size="22" font-style="italic" font-family="Liberation Serif" font-weight="bold" fill="#a5a5a5">ε</text><path d="M11 14h11v9h-3v-5h-4v5h-4z" fill="#c8c8c8" stroke="#aaa"/>',
lexp:'<path d="M3 3v17h4M3 4.500h10M7 9v12h6" stroke="#888" fill="none"/><path d="M7 7h5v4H7zM7 14h5v4H7z" fill="#fff" stroke="#f0902c" stroke-width="1.400"/><path d="M14 3h6v11h3l-6 7-6-7h3z" fill="#5683b6" stroke="#2e527b"/>',
lcol:'<path d="M3 3v17h4M3 4.500h10M7 9v12h6" stroke="#888" fill="none"/><path d="M6 7h5v4H6zM6 14h5v4H6z" fill="#fff" stroke="#f0902c" stroke-width="1.400"/><path d="M14 21h6V10h3l-6-7-6 7h3z" fill="#5683b6" stroke="#2e527b"/>',
lrem:'<rect x="2" y="2.500" width="17.500" height="17" fill="#f4f4f4" stroke="#888" stroke-width="1.500"/><rect x="14" y="15.500" width="9" height="7.500" rx="1.500" fill="#e3474d"/><path d="M15.500 19.200h6" stroke="#fff" stroke-width="1.800"/>',
crs:'<circle cx="12" cy="12" r="11" fill="#8b8b8b"/><path d="M12 2.500v19M2.500 12h19" stroke="#ddd" stroke-width="1.500"/><ellipse cx="12" cy="12" rx="5" ry="9.500" fill="none" stroke="#ddd" stroke-width="1.500"/><circle cx="12" cy="12" r="8.500" fill="none" stroke="#ccc"/>',
msg:'<path d="M12 3c6 0 10.500 3.500 10.500 8 0 3-2 5-4 6.500l1.500 5-6-4C6 19.500 1.500 15.500 1.500 11S6 3 12 3z" fill="#4f4f4f"/><path d="M6.500 11h3M10.800 11h3M15 11h3" stroke="#fff" stroke-width="2.200"/>',
mouse:'<path d="M3 4c4-5 7-1 9 3s2 7-1 8-5-2-7-5-2-4-1-6z" fill="#ddd" stroke="#222" stroke-width="1.600"/><path d="M3 9l7-4M6 2l3 7M14 6l7-5M8 21c4 3 13 1 13-4s-5-4-8-1l-5 5c-2-4 0-6 3-7l10 5" stroke="#222" stroke-width="1.700" fill="none"/>'
};
const svg=(n,s=24)=>`<svg width="${s}" height="${s}" viewBox="0 0 24 24" style="overflow:visible;display:block;flex:none">${ICONS[n]}</svg>`;
const define=(name,html,fn)=>customElements.define(name,class extends HTMLElement{
  connectedCallback(){if(this.shadowRoot)return;const r=this.attachShadow({mode:'open'});r.innerHTML=typeof html==='function'?html(this):html;if(fn)fn(this,r)}
});

/* Text that is tracked to occupy a given width */
define('ui-text','<style>:host{display:block;flex:none;white-space:nowrap;line-height:16px}span{display:inline-block}</style><span><slot></slot></span>',(el,r)=>{
  const w=+el.getAttribute('w');if(!w)return;el.style.width=w+'px';
  const s=r.querySelector('span');s.style.letterSpacing=((w-s.getBoundingClientRect().width)/el.textContent.length)+'px';
});

define('tool-grip',el=>`<style>:host{display:block;flex:none;width:14px;height:29px}:host([h]){width:auto;height:5px;flex:1}
i{display:block;width:6px;height:100%;margin-left:6px}:host([h]) i{width:100%;margin:0}:host([lead]){width:12px}
i{background:radial-gradient(circle at 1.500px 1.500px,#c2c2c2 1px,transparent 1.400px) 0 0/6px 5px,radial-gradient(circle at 1px 1px,#fff 1px,transparent 1.300px) 0 0/6px 5px,radial-gradient(circle at 4.500px 4px,#c2c2c2 1px,transparent 1.400px) 0 0/6px 5px,radial-gradient(circle at 3.800px 3.200px,#fff 1px,transparent 1.300px) 0 0/6px 5px}</style><i></i>`);

define('tool-button',el=>`<style>:host{display:flex;flex:none;align-items:center;width:35px;height:34px}
:host([menu]){width:47px}:host([small]){width:auto;height:auto}
b{display:flex;width:35px;height:33px;align-items:center;justify-content:center;box-sizing:border-box}:host([small]) b{width:27px;height:24px}
:host([on]) b{border:1px solid #8a8a8a;border-radius:2px;background:linear-gradient(#c9c9c9,#dcdcdc)}
u{width:0;height:0;border:4.500px solid transparent;border-top:5px solid var(--arrow,#8c8c8c);border-bottom:0}</style>
<b>${svg(el.getAttribute('icon'),+el.getAttribute('size')||24)}</b>${el.hasAttribute('menu')?'<u></u>':''}`,el=>{if(el.getAttribute('menu')==='dark')el.style.setProperty('--arrow','#000')});

/* A row of tools. "|" is a grip, ":v" a grey menu arrow, ":V" a black one, ":on" a pressed tool */
define('tool-bar',el=>`<style>:host{display:flex;flex:none;align-items:center;box-sizing:border-box;height:39px;border-bottom:1px solid #b4b4b4;box-shadow:inset 0 1px #fbfbfb}</style>${el.getAttribute('tools').trim().split(/\s+/).map((t,i)=>{if(t==='|')return`<tool-grip ${i?'':'lead'}></tool-grip>`;const[n,m]=t.split(':');return`<tool-button icon="${n}" ${m==='v'?'menu':m==='V'?'menu="dark"':m==='on'?'on':''}></tool-button>`}).join('')}<slot></slot>`);

define('title-bar',`<style>:host{display:flex;height:22px;background:#fff;align-items:center;box-sizing:border-box;padding:0 19px 3px 3px;font:12px "Open Sans","Noto Sans",sans-serif}
.g{flex:1}ui-text{margin-left:6px}.w{display:flex;gap:36px;margin-top:-3px}.w svg{display:block}</style>${svg('qgis',14)}<ui-text w="93">QGIS 2.14.3-Essen</ui-text><div class="g"></div>
<div class="w"><svg width="10" height="10" viewBox="0 0 10 10"><path d="M0 6.500h10" stroke="#000"/></svg><svg width="10" height="11" viewBox="0 0 10 11"><path d="M.5 3.500h6.500v7H.5zM2.500 3.500v-3h7v7H7" fill="none" stroke="#000"/></svg><svg width="11" height="11" viewBox="0 0 11 11"><path d="M.5.500l10 10M10.500.500L.5 10.500" stroke="#000"/></svg></div>`);

define('menu-bar',()=>{const m=[['Project',35,14.500],['Edit',18.500,15],['View',22,15],['Layer',27,15],['Settings',39,15],['Plugins',33,15],['Vector',30,15],['Raster',32,15],['Database',46,15],['Web',21.500,15],['Processing',51,15],['Help',22,0]];
return `<style>:host{display:flex;height:22px;box-sizing:border-box;align-items:center;padding:1px 0 0 9px;border-bottom:1px solid #b4b4b4}</style>${m.map(([t,w,g])=>`<ui-text w="${w}" style="margin-right:${g}px">${t}</ui-text>`).join('')}`});

define('num-spin','<style>:host{display:flex;box-sizing:border-box;border:1px solid #aaa;border-radius:2px;background:#fff;align-items:center;padding-left:4px}div{flex:1}i{display:flex;flex-direction:column;width:15px;height:100%;border-left:1px solid #aaa;background:#f2f2f2}b{flex:1;display:flex;align-items:center;justify-content:center}b+b{border-top:1px solid #bbb}u{border:3.500px solid transparent;border-bottom:4px solid var(--a,#555);border-top:0}b+b u{border-top:4px solid var(--a,#555);border-bottom:0}</style><div><slot></slot></div><i><b><u></u></b><b><u></u></b></i>');

define('side-tools',()=>{const a='addvec addras addpg addlite addms addora addwms addwcs addwfs comma virt'.split(' '),b='topo geomcheck editform'.split(' ');
const t=n=>`<tool-button icon="${n}"></tool-button>`;
return `<style>:host{display:flex;flex:none;flex-direction:column;width:51px;box-sizing:border-box;align-items:center;padding-top:6px}
tool-button{height:34px}tool-grip{flex:none;width:41px}.m{display:flex;padding-left:3px;align-self:stretch}.m tool-button{width:49px;justify-content:space-between}.second{margin:8px 0 0}</style>
<tool-grip h style="flex:none"></tool-grip>${a.map(t).join('')}<div class="m"><tool-button icon="newshp" menu="dark" style="margin-left:-1px"></tool-button></div><tool-grip h class="second" style="flex:none"></tool-grip>${b.map(t).join('')}`});

define('check-box','<style>:host{display:flex;flex:none;width:12px;height:12px;box-sizing:border-box;border:1px solid #c4c4c4;background:#fff;align-items:center;justify-content:center}</style><svg width="10" height="10" viewBox="0 0 8 8"><path d="M1 1l6 6M7 1L1 7" stroke="#000" stroke-width="2.400"/></svg>');

define('layer-row',el=>`<style>:host{display:flex;height:16px;align-items:center;box-sizing:border-box;font-weight:bold;font-size:11.500px}
.t{width:24px;height:100%;flex:none}.s{width:16px;height:16px;flex:none;margin:0 6px 0 6px;box-sizing:border-box}
:host([sel]) .bg{background:#efefef}:host([sel]) ui-text{box-shadow:inset 0 -1px #efefef,inset 0 -2px #000}.bg{display:flex;flex:1;height:100%;align-items:center}
.bbox{background:#fff;border:1px solid #666}.poly{background:#f0f3c7;border:1px solid #c6c89f}</style>
<svg class="t" viewBox="0 0 24 16"><path d="M11.500 0v${el.hasAttribute('last')?8:16}M11.500 8.500h10" stroke="#888" stroke-dasharray="1 1" fill="none"/></svg><div class="bg"><check-box></check-box>${el.getAttribute('kind')==='ras'?'<svg class="s" viewBox="0 0 16 16"><path d="M0 0h16v16H0z" fill="#4a86c8"/><path d="M0 0h5v5H0zM11 0h5v5h-5zM5 5h6v6H5zM0 11h5v5H0zM13 6h3v4h-3z" fill="#1f4a7a"/><path d="M11 11h5v5h-5z" fill="#dce8f4"/><path d="M5 0h6v5H5zM5 11h6v5H5z" fill="#5f9be0"/></svg>':`<span class="s ${el.getAttribute('kind')}"></span>`}<ui-text w="${el.getAttribute('w')}"><slot></slot></ui-text></div>`,(el,r)=>{
  const u=r.querySelector('ui-text'),s=u.shadowRoot.querySelector('span'),w=+el.getAttribute('w');u.textContent=el.textContent;s.style.letterSpacing='0px';s.style.letterSpacing=((w-s.getBoundingClientRect().width)/el.textContent.length)+'px'});

define('layers-panel',`<style>:host{display:flex;flex:none;flex-direction:column;width:273px;box-sizing:border-box;border-left:2px solid #b9b9b9}
.h{display:flex;box-sizing:border-box;height:20px;align-items:center;padding:0 0 2px 2px}.h ui-text{margin:0 8px 0 7px}.h i{display:flex;width:13px;height:13px;border:1px solid #888;border-radius:2px;box-sizing:border-box;margin-left:2px;align-items:center;justify-content:center;background:#f6f6f6}.h i:last-child{margin-right:1px}
.tb{display:flex;box-sizing:border-box;height:38px;align-items:center;padding:0 0 8px 1px}.tree{flex:1;border:1px solid #b0b0b0;border-radius:2px;background:#fff;padding-top:1px}
svg{display:block}</style><div class="h"><tool-grip h></tool-grip><ui-text w="54">Layers Panel</ui-text><tool-grip h></tool-grip>
<i><svg width="9" height="9"><path d="M.5 3.500h5v5h-5zM3 3V.8h5.500v5H6" fill="none" stroke="#000" stroke-width="1.300"/></svg></i><i><svg width="9" height="9"><path d="M1 1l7 7M8 1L1 8" stroke="#000" stroke-width="1.500"/></svg></i></div>
<div class="tb"><tool-button small icon="lgroup" size="17"></tool-button><tool-button small icon="leye" size="18"></tool-button><tool-button small icon="lfilter" size="17"></tool-button><tool-button small icon="leps" size="17" menu></tool-button><tool-button small icon="lexp" size="18" style="margin-left:3px"></tool-button><tool-button small icon="lcol" size="18"></tool-button><tool-button small icon="lrem" size="17"></tool-button></div>
<div class="tree"><layer-row kind="bbox" w="28">bbox</layer-row><layer-row kind="ras" sel w="189">713122_187131_856482_330491</layer-row><layer-row kind="poly" last w="87">intersect_layer</layer-row></div>`);

/* ---------- map ---------- */
const conv=(ox,oy,sx,sy,s)=>s.trim().split(/\s+/).map(p=>{const[x,y]=p.split(',');return[ox+x/sx,oy+y/sy]});
const rng=(s=>()=>((s=(s*1664525+1013904223)>>>0)/4294967296))(77);
const rough=(pts,a=.9)=>{const o=[];pts.forEach((p,i)=>{o.push(p);const q=pts[(i+1)%pts.length],d=Math.hypot(q[0]-p[0],q[1]-p[1]);if(d>4&&d<40){const n=Math.floor(d/2.500);for(let k=1;k<n;k++)o.push([p[0]+(q[0]-p[0])*k/n+(rng()-.5)*a,p[1]+(q[1]-p[1])*k/n+(rng()-.5)*a])}});return'M'+o.map(p=>p[0].toFixed(1)+' '+p[1].toFixed(1)).join('L')+'z'};
const NW=conv(440,460,2.8,3,`28,912 40,896 52,884 60,866 72,868 82,862 84,852 94,852 98,838 96,826 102,822 106,830 116,832 124,824 130,828 146,828 160,830 172,828 180,832 186,828 174,818 172,812 164,816 162,808 172,804 188,800 194,796 182,786 174,780 172,772 178,766 188,764 192,756 200,750 196,742 186,738 172,742 166,736 172,728 170,714 160,712 156,704 160,694 166,690 162,674 178,670 184,656 182,636 174,618 166,610 174,602 172,576 182,572 190,586 200,576 222,576 236,562 248,554 258,546 260,530 256,518 268,514 278,496 270,484 262,480 264,462 258,446 248,440 232,444 216,434 206,428 192,428 174,418 166,412 176,404 178,394 186,404 196,392 214,384 216,362 226,358 238,355 252,358 260,366 286,373 290,390 296,406 328,406 332,394 342,384 346,404 366,404 400,398 433,394 426,384 424,350 418,340 424,328 414,306 402,296 432,288 440,280 438,268 442,256 436,248 444,236 438,228 452,214 476,200 496,200 500,212 532,216 546,236 568,260 582,288 608,300 622,328 638,326 656,344 672,358 680,368 700,374 708,380 730,376 752,380 776,377 786,372 798,375 810,370 828,371 864,381 890,382 908,388 930,381 950,376 972,368 990,375 1014,367 1040,371 1060,370 1082,354 1086,338 1114,332 1132,332 1118,314 1096,300 1100,250 1094,236 1116,228 1122,190 1142,188 1186,182 1196,174 1212,184 1222,176 1234,180 1244,174 1258,180 1286,184 1292,176 1310,164 1352,164 1366,158 1374,166 1382,158 1386,130 1392,118 1396,92 1416,86 1438,62 1452,68 1458,84 1470,92 1482,82 1498,94 1508,102 1502,118 1514,116 1528,108 1544,116`);
const E=conv(980,390,3,2.8,`36,300 100,280 180,240 228,214 234,206 250,184 248,150 270,124 288,100 290,78 300,84 350,68 385,60 428,54 434,66 460,66 478,84 490,80 525,84 536,98 546,100 555,86 590,74 604,78 624,78 628,62 668,60 676,44 700,60 716,82 750,86 758,110 770,128 778,154 790,162 800,176 825,182 846,184 850,168 870,170 880,164 925,152 945,156 968,156 985,138 1002,126 1010,132 1026,136 1020,148 1030,162 1050,168 1052,184 1060,194 1064,210 1080,234 1104,226 1130,226 1138,240 1150,246 1164,260 1160,268 1172,284 1172,304 1206,314 1220,302 1246,296 1272,298 1280,316 1296,338 1294,350 1282,358 1284,374 1304,388 1296,404 1276,408 1268,424 1252,430 1250,446 1258,456 1248,462 1232,464 1222,490 1206,500 1166,502 1132,484 1120,490 1114,522 1096,518 1068,512 1060,532 1042,534 1040,550 1028,560 1026,582 1012,614 994,616 984,634 968,640 958,650 948,656 940,682 954,716 946,744 916,746 908,760 896,790 894,812 884,826 880,834 884,858 866,864 862,880 856,906 850,908 846,972 810,974 810,994 802,992 798,1010 778,1016 784,1040 780,1052 748,1066 746,1088 732,1112 752,1134 742,1156 708,1160 720,1172 702,1192 682,1188 662,1196 656,1214 662,1224 656,1244 644,1252 640,1270 646,1286 664,1300 654,1326 622,1324 614,1334 606,1390 578,1394 574,1410 556,1424 538,1414 504,1414 500,1406 492,1412 472,1400 432,1410 420,1424 426,1448 412,1450 408,1472 390,1484 372,1496 350,1480 314,1462 306,1486 270,1488 246,1476 238,1480 206,1504 192,1484 172,1480 160,1490 148,1476 122,1490 108,1488 102,1472 66,1472 34,1488`);
const S=conv(440,720,2.8,3,`1524,616 1500,604 1476,584 1464,580 1448,594 1424,588 1412,602 1396,608 1406,624 1384,640 1378,656 1356,676 1342,670 1306,692 1312,706 1250,704 1248,680 1236,676 1220,698 1222,722 1196,724 1190,748 1152,742 1134,754 1114,760 1108,776 1076,760 1068,752 1050,756 1046,778 1034,784 1034,802 1014,824 1004,830 980,832 976,850 962,848 960,862 944,862 942,852 928,846 918,856 882,852 870,838 832,832 814,846 786,836 780,828 738,830 722,842 708,824 690,812 678,812 664,802 640,796 630,764 602,736 548,726 544,738 528,734 534,726 522,716 524,726 512,730 516,716 508,706 510,698 498,712 500,700 494,692 484,690 478,684 490,676 480,660 468,652 474,644 464,630 456,640 462,622 446,620 446,600 434,584 404,570 376,550 362,542 330,514 324,470 308,456 292,444 262,436 240,396 222,392 188,366 184,330 170,324 166,312 146,290 132,280 134,266 148,262 146,242 130,238 120,226 108,204 106,178 116,174 120,152 100,132 80,126 40,138 28,130`);
const specks=(cx,cy,rx,ry,n,c,m=9)=>{let d='';for(let i=0;i<n;i++){const a=rng()*6.283,r=Math.sqrt(rng()),x=cx+rx*r*Math.cos(a),y=cy+ry*r*Math.sin(a),w=2+rng()*m,h=2+rng()*m*.8;d+=`M${x.toFixed(0)} ${y.toFixed(0)}l${(w*.6).toFixed(1)} ${(-h*.4).toFixed(1)} ${(w*.5).toFixed(1)} ${(h*.5).toFixed(1)} ${(-w*.3).toFixed(1)} ${(h*.7).toFixed(1)} ${(-w*.7).toFixed(1)} ${(-h*.2).toFixed(1)}z`}return`<path d="${d}" fill="${c}"/>`};
const G='#cbdeab',W='#a3c4ff',Y='#ffda60';
const pl=(s,c,w)=>`<polyline points="${s}" fill="none" stroke="${c}" stroke-width="${w}" stroke-linejoin="round"/>`;
const TILE=`
<rect x="30" y="226" width="820" height="820" fill="#e8e4dd"/>
<path d="M100 226l4 18 14 4 22-12 20 12 20 2 14-4 20 4 18-6 14-18z" fill="#fff"/>
<path d="M300 332l50-10 18 6 16 26 14 12 12 4 6 30 14 10-14 14-24 6-4 20-14 6-30 4-6 12-20 10-8-8-10 8-6-20-16-14-28 0-8-18 8-26 16-22 18-6 8-16z" fill="${G}"/>
<path d="M36 486l40-14 30 10 40 4 44 4-6 20-34 10-40 4-30 8-44-6zM36 364l30-10 30 20 20-24 40-6 36 12 20 20-26 12-24-6-30 20-34-8-26 20-30-8zM110 400l60-20 30 6-50 18-30 22z" fill="${G}"/>
<path d="M560 385l20-10 24 10 20-4 10 14-30 8-26 4-4 34-18-2 6-26zM600 490l14-10 30 12-6 24-24 4-14-10z" fill="${G}"/>
<path d="M180 650l30-10 10 14-24 14-20-6zM240 664l24 0 4 14-26 12zM236 700l24 6-4 30-16 2z" fill="${G}"/>
${specks(130,380,100,60,170,G,13)+specks(340,400,95,95,170,G,14)+specks(100,500,80,40,90,G,12)+specks(200,280,40,50,60,G,14)+specks(260,270,40,40,50,G,14)+specks(580,270,110,40,100,G,13)+specks(420,260,180,28,60,G,9)+specks(230,660,90,60,100,G,14)+specks(240,710,40,40,40,G,16)+specks(360,600,60,40,40,G,9)+specks(480,560,80,60,50,G,6)+specks(610,500,50,35,60,G,12)+specks(80,1005,50,30,60,G,12)+specks(500,830,110,110,60,G,8)+specks(640,850,60,40,60,G,9)+specks(720,880,110,90,90,G,10)+specks(590,980,80,60,100,G,11)+specks(700,440,120,60,40,G,6)+specks(820,740,26,40,40,G,11)+specks(440,640,400,390,230,G,6)+specks(430,640,400,390,120,W,3)+specks(600,405,40,16,20,W,8)+specks(550,540,40,50,24,W,8)}
<path d="M396 636l20-10 6 10-12 12-4 20-10 20-12 24-12 6 2-22 12-28zM338 742l20-6 12 6-14 12-18-4zM562 650l16-18 6 6-4 26-16 4zM680 610l10-4 4 18-12 8zM370 620l24 4-8 8z" fill="${W}"/>
${pl('410,232 416,260 434,300 442,345 460,390 490,400 500,440 530,446 545,460 566,470 560,500 575,530 545,570 530,590',W,4)}
${pl('470,365 490,385 508,400 496,425 520,436 540,440 560,436 572,452 580,470',W,3)}
${pl('560,236 530,270 516,300 516,345',W,3)}${pl('712,296 740,290 764,296 800,304 830,290 846,288',W,4)}${pl('690,250 684,290 706,304 700,330',W,3)}
${pl('262,500 280,540 320,580 380,612 410,620',W,3)}${pl('90,748 106,780 130,800 136,840 160,870 190,900 196,945 230,960 200,990 205,1036',W,3)}
${pl('280,790 300,812 296,850 316,880 300,894 270,890 240,930 205,946',W,4)}${pl('402,1041 430,1010 470,990 485,950',W,4)}${pl('650,1020 690,970 740,934 790,915 846,896',W,3)}${pl('490,440 520,490 550,500',W,3)}
<g>${pl('36,426 60,428 110,420 150,405 200,388 226,396 240,430 262,450 268,500 262,540 276,570 290,595',Y,4.5)}
${pl('36,600 60,592 84,560 100,520 96,480 150,474 200,470 266,486',Y,4.5)}
${pl('84,570 124,580 130,598 170,588 250,560 290,585 330,570 380,545 400,505 430,480 460,470 462,350',Y,4.5)}
${pl('200,388 210,350 216,310 232,280 250,240 330,254 380,262 416,286 440,330 444,372 460,390 490,432 560,470 590,490 640,530 700,575 760,620 790,680 846,684',Y,5)}
${pl('470,345 520,300 530,260 545,232',Y,4)}${pl('470,350 520,362 560,354 620,318 680,312 700,290 706,232',Y,4)}${pl('600,234 632,270 640,290 680,330 690,350 740,340 760,375 800,405 846,436 690,440 650,460 600,490',Y,4)}
${pl('290,600 260,640 230,680 180,734 120,738 36,722',Y,4.5)}${pl('36,780 70,745 110,755 130,800 156,860 170,910 205,960 240,1041',Y,5)}
${pl('290,615 340,632 390,650 440,642 430,660 450,690 462,710 458,780 420,810 380,830 380,870 345,905 290,940 205,950 150,935 100,925 36,940',Y,4.5)}
${pl('36,946 150,945 200,960 230,945 290,940 330,985 376,1036',Y,4.5)}${pl('345,905 430,898 470,908 510,870 580,846 640,826 690,780 735,785 740,752 780,725',Y,4.5)}
${pl('440,672 490,705 540,685 580,678 680,692 780,690 810,700 806,770 786,830 780,900 790,930 846,960',Y,4.5)}${pl('575,846 650,870 720,880 780,898 784,920 740,960 690,985 655,1036',Y,5)}
${pl('808,690 820,650 820,590 830,560 836,430',Y,4.5)}${pl('36,920 50,890 60,860 36,840',Y,4)}<circle cx="70" cy="742" r="12" fill="none" stroke="${Y}" stroke-width="4"/><circle cx="195" cy="960" r="11" fill="none" stroke="${Y}" stroke-width="7"/><circle cx="448" cy="355" r="10" fill="none" stroke="${Y}" stroke-width="4"/><circle cx="808" cy="684" r="12" fill="#cfdba0" stroke="${Y}" stroke-width="4"/></g>
<g>${[
'132,326 150,345 182,340 200,368 230,368 234,348 260,360 270,334 296,328 310,345 306,372 320,382 312,420 318,440 302,460 328,470 322,495 326,530 330,560 360,600 390,615 430,635 442,630 460,628 486,640 478,620 500,620 540,580 560,560 570,530 562,500 576,470 574,440 590,420 566,415 580,388 630,398 640,380 690,398 716,395',
'132,326 150,340 96,374 116,395 112,420 98,430 96,462 76,474 36,476','36,505 46,490 36,486',
'36,685 54,665 56,640 86,645 100,632 114,645 118,680 162,708 170,680 200,676 210,695 236,716 240,745 256,778 280,780 282,792 300,780 330,765 370,740 400,712 418,680 416,660 440,640',
'466,632 466,660 486,685 520,680 538,694 536,730 546,770 552,830 552,880 540,906 570,920 600,945 670,952 678,990 650,1010 652,1041',
'540,906 505,940 482,958 485,1000 474,1025 440,1025 425,1038','36,790 70,810 110,840 112,890 150,930 154,950 136,980 140,1010 160,1041',
'846,284 790,290 740,290 708,308 712,340 720,360','590,440 620,448 650,470 700,462 740,462 752,452 774,460 766,545 808,580 846,586','820,1036 846,1020'].map(p=>pl(p,'#c7ab90',6)).join('')}</g>
${pl('36,322 62,322 70,345 92,326 132,298 164,268 196,256 212,250 234,262 248,250 250,232','#aaa69f',10)}
${pl('36,606 92,596 116,612 184,612 240,600 290,594 302,584 356,566 416,538 434,512 466,494 570,510 576,517 598,516 606,536 650,548 670,570 704,588 724,604 756,656 776,695','#ff9135',9)}
${pl('776,690 776,734','#ffb07a',6)}${pl('650,548 676,524 696,494 746,475 820,477 846,486','#ff9135',8)}${pl('466,494 490,440 466,385 464,346','#ff9135',9)}
<path d="M832 1014l14-4v26l-14-6z" fill="#aaa69f"/>
<g font-family="Liberation Serif" font-style="italic" font-size="35" fill="#ae7d4c" stroke="#fffaf0" stroke-width="5" paint-order="stroke" stroke-linejoin="round">
<text x="248" y="273" textLength="540" lengthAdjust="spacingAndGlyphs">BORSOD–ABAÚJ–ZEMPLÉN MEGYE</text>
<text x="84" y="540" textLength="218" lengthAdjust="spacingAndGlyphs">HEVES MEGYE</text>
<text x="704" y="387" font-size="31" textLength="148" lengthAdjust="spacingAndGlyphs">SZABOLC</text>
<text x="565" y="728" textLength="302" lengthAdjust="spacingAndGlyphs">HAJDÚ–BIHAR MEG</text>
<text x="38" y="870" textLength="532" lengthAdjust="spacingAndGlyphs">ÁSZ–NAGYKUN–SZOLNOK MEGYE</text></g>`;
define('map-canvas',()=>`<style>:host{display:block;flex:1;min-width:0;box-sizing:border-box;border:2px solid #5ba6f3;border-left-color:#1a7fe0;border-top-color:#2f8de6;border-radius:2px;background:#fff;overflow:hidden}svg{display:block;width:100%;height:100%}</style>
<svg viewBox="333 163 1481 883" preserveAspectRatio="none"><defs><clipPath id="tile"><rect x="991.500" y="467" width="270.500" height="270"/></clipPath></defs>
<path d="${rough([...NW,...E,...S])}" fill="#f0f3c7" stroke="#b9bb93" stroke-width="1"/>
<g clip-path="url(#tile)"><g transform="translate(980 390) scale(.33333)">${TILE}</g></g>
<g fill="none" stroke="#000" stroke-width="1.300"><path d="M449 466.600H1533.300M449 737.400H1533.300M449 1008.400H1533.300M990.500 195.500H1533.300"/><path d="M449.400 466v543M720.300 466v543"/><path d="M991.200 163v32.500" stroke-width="1.200"/><path d="M991.200 195v814" stroke-width="1.700"/><path d="M1262.100 195v542"/><path d="M1262.100 737v271.500" stroke="#555"/><path d="M1532.800 163v574"/><path d="M1532.800 737v271.500" stroke="#333" stroke-width="1.100"/></g></svg>`);

define('status-bar',`<style>:host{display:flex;height:29px;flex:none;align-items:center;padding:1px 15px 0 5px;box-sizing:border-box}.g{flex:1}
.f{height:20px;box-sizing:border-box;border:1px solid #b0b0b0;border-radius:2px;background:#fff;display:flex;align-items:center;justify-content:center}
.b{width:20px;height:23px;border:1px solid #909090;border-radius:2px;box-sizing:border-box;display:flex;align-items:center;justify-content:center;background:#f4f4f4;margin-right:9px}
.c{width:86px;justify-content:flex-start;padding-left:4px;margin:0 9px 0 10px}.c i{margin-left:auto;width:15px;height:100%;border-left:1px solid #bbb;background:#f2f2f2;display:flex;align-items:center;justify-content:center}.c u{border:3.500px solid transparent;border-top:5px solid #000;border-bottom:0}
num-spin{--a:#000;width:97px;height:23px;margin:0 7px 0 10px}</style>
<ui-text w="111">Table retrieval finished.</ui-text><div class="g"></div><ui-text w="53">Coordinate</ui-text><div class="f" style="width:288px;margin-left:4px"><ui-text w="76">366409,377923</ui-text></div><div class="b">${svg('mouse',16)}</div>
<ui-text w="25">Scale</ui-text><div class="f c"><ui-text w="58">1:2 000 000</ui-text><i><u></u></i></div><ui-text w="41">Rotation</ui-text><num-spin><ui-text w="16">0,0</ui-text></num-spin><check-box></check-box><ui-text w="35" style="margin:0 20px 0 5px">Render</ui-text>${svg('crs',14)}<ui-text w="59" style="margin:0 22px 0 4px">EPSG:23700</ui-text>${svg('msg',16)}`);

define('qgis-window',`<style>:host{display:flex;flex-direction:column;width:1816px;height:1077px;box-sizing:border-box;border-left:1px solid #111;background:#efefef;overflow:hidden}
.main{display:flex;flex:1;min-height:0;padding-top:1px}.split{width:6px;flex:none;display:flex;align-items:center;justify-content:center}.split i{width:3px;height:290px;background:radial-gradient(circle at 1px 1px,#c8c8c8 .8px,transparent 1.200px) 0 0/3px 5px}
hr{width:1px;height:29px;border:0;margin:0 1px;background:#b4b4b4;flex:none}num-spin{width:45px;height:19px;color:#888;--a:#666}</style>
<title-bar></title-bar><menu-bar></menu-bar>
<tool-bar tools="| new open save saveas print composer | touch:on pan panto zoomin zoomout zoom11 zoomfull zoomsel zoomlayer zoomlast zoomnext refresh | identify action:v select:v expr:v deselect table abacus sigma measure:V tip annonew anno textanno:V | help | label labelpin labelpin2 labeleye labelmove labelrot labeledit | darktile webglobe mapq"></tool-bar>
<tool-bar tools="| pencils pencil savegray addfeat curve:v movefeat nodes trash cut copy paste | db | setsquare magnet undo redo rotfeat simplify addring addpart fillring delring delpart reshape offset split splitparts merge mergeattr rotsym"></tool-bar>
<tool-bar style="height:38px;padding-top:1px" tools="| python wheel reload reloadcfg qgis layersleaf para wkt | rsq rcross scross ccross elldots ellcross"><hr><tool-button icon="spiral"></tool-button><hr><num-spin style="margin-left:1px"><ui-text w="13">36</ui-text></num-spin></tool-bar>
<div class="main"><side-tools></side-tools><layers-panel></layers-panel><div class="split"><i></i></div><map-canvas></map-canvas></div><status-bar></status-bar>`);
</script>
</body>
</html>
